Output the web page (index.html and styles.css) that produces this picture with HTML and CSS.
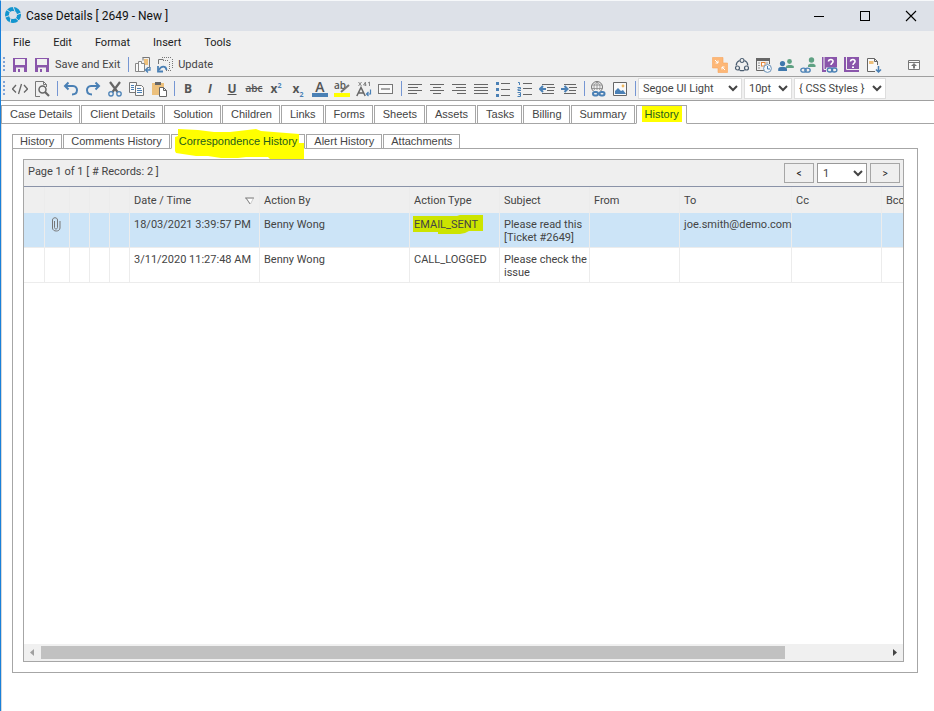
FILE: index.html
```html
<!DOCTYPE html>
<html lang="en">
<head>
<meta charset="utf-8">
<title>Case Details</title>
<link rel="stylesheet" href="styles.css">
</head>
<body>
<div class="window">
  <header class="titlebar">
    <svg class="logo" width="18" height="18" viewBox="0 0 18 18"><circle cx="9" cy="9" r="6" fill="none" stroke="#1295cf" stroke-width="4"/><path d="M9 .5l2 5M17 7l-5 2M15 15l-4-3.500M6 17l1-5M.5 11.500l5-2M2.500 3.500l4 3" stroke="#dde1e8" stroke-width="1"/></svg>
    <h1>Case Details [ 2649 - New ]</h1>
    <div class="winbtns">
      <button aria-label="Minimize"><svg width="12" height="12" viewBox="0 0 12 12"><path d="M1 6.500h10" stroke="#000"/></svg></button>
      <button aria-label="Maximize"><svg width="12" height="12" viewBox="0 0 12 12"><rect x="1.500" y="1.500" width="9" height="9" fill="none" stroke="#000"/></svg></button>
      <button aria-label="Close"><svg width="12" height="12" viewBox="0 0 12 12"><path d="M1 1l10 10M11 1L1 11" stroke="#000" stroke-width="1.100"/></svg></button>
    </div>
  </header>
  <nav class="menubar">
    <button>File</button><button>Edit</button><button>Format</button><button>Insert</button><button>Tools</button>
  </nav>
  <div class="toolbar">
    <span class="grip"></span>
    <button aria-label="Save"><svg viewBox="0 0 16 16"><path d="M1 1h14v14H1z" fill="#8a56ab"/><path d="M3 2h10v6H3zM4 10.500h8V15H4z" fill="#f0f0f0"/><path d="M6 12h2v3H6z" fill="#8a56ab"/></svg></button>
    <button class="labelled"><svg viewBox="0 0 16 16"><path d="M1 1h14v14H1z" fill="#8a56ab"/><path d="M3 2h10v6H3zM4 10.500h8V15H4z" fill="#f0f0f0"/><path d="M6 12h2v3H6z" fill="#8a56ab"/></svg><span>Save and Exit</span></button>
    <span class="sep wide"></span>
    <button aria-label="Copy to form"><svg viewBox="0 0 16 16"><path d="M7.500 .5h7v10h-2M8 .5v3" fill="none" stroke="#777"/><path d="M9 2h4v6H9z" fill="#eec07b"/><path d="M.5 6.500h3v-2h3v2M.5 6.500v8h9v-8h-3M3.500 6v8.500" fill="#fafafa" stroke="#888"/><path d="M15 10v3h-4m2-2.500L10.500 13l2.500 2.500" fill="none" stroke="#4a80b5" stroke-width="1.300"/></svg></button>
    <button class="labelled"><svg viewBox="0 0 16 16"><path d="M1.500 7V2.500h5" fill="none" stroke="#777"/><path d="M5 .5h9M15.500 2v10M9 13.500h6M6 3.500h6M12.500 5v7" stroke="#777" stroke-dasharray="1 1"/><path d="M9.500 13C9 8.500 4 8.500 2 13M1 9v5.500h5" fill="none" stroke="#4a80b5" stroke-width="1.800"/></svg><span>Update</span></button>
    <span class="spacer"></span>
    <button aria-label="Merge"><svg viewBox="0 0 16 16"><path d="M5 .5h6V6h4.500v9.500H6V11H.5V.5z" fill="#fdb777" stroke="#f8a45c" stroke-width=".6"/><path d="M3 3l3 3m0-2.500V6H3.500M13 13l-3-3m0 2.500V10h2.500" fill="none" stroke="#fff"/></svg></button>
    <button aria-label="Workflow"><svg viewBox="0 0 16 16" fill="none" stroke="#4b5d70" stroke-width="1.200"><circle cx="8" cy="3.500" r="2"/><circle cx="3.500" cy="11" r="2"/><circle cx="12.500" cy="11" r="2"/><path d="M5.500 3.500C3.500 4.500 2.200 6 2.200 8.500M10.500 3.500c2 1 3.300 2.500 3.300 5M5.500 13.200c2 .8 3 .8 5 0"/></svg></button>
    <button aria-label="Schedule"><svg viewBox="0 0 16 16"><path d="M.5 1v12.500H8M13.500 1v6M0 1.500h14" fill="none" stroke="#666"/><path d="M0 1h14v3H0z" fill="#666"/><path d="M2 6h2M10 6h2M2 11h2M2 8.500h2" stroke="#999"/><rect x="5.500" y="5.500" width="3.500" height="3.500" fill="#fff" stroke="#e5883c"/><circle cx="11.500" cy="11.500" r="3.900" fill="#f5f8fb" stroke="#6d93b8"/><path d="M11.500 9v3H14" fill="none" stroke="#4a80b5"/></svg></button>
    <button aria-label="Users"><svg viewBox="0 0 16 16"><circle cx="11.500" cy="4.500" r="2.400" fill="#5fa183"/><path d="M8 11V9.500c0-2 7.800-2 7.800 0V11z" fill="#5fa183"/><circle cx="4.500" cy="6.500" r="2.600" fill="#3f78ad"/><path d="M.2 14v-2c0-3 8.800-3 8.800 0v2z" fill="#3f78ad"/></svg></button>
    <button aria-label="Link user"><svg viewBox="0 0 16 16"><circle cx="11.500" cy="3" r="2.700" fill="#5fa183"/><path d="M8 10V8.500c0-2.500 7.500-2.500 7.500 0V10z" fill="#5fa183"/><ellipse cx="3.500" cy="13.200" rx="2.700" ry="2" fill="none" stroke="#4a80b5" stroke-width="1.300"/><ellipse cx="7.500" cy="13.200" rx="2.700" ry="2" fill="none" stroke="#4a80b5" stroke-width="1.300"/></svg></button>
    <button aria-label="Linked help"><svg viewBox="0 0 16 16"><path d="M0 0h15v15H0z" fill="#8a56ab"/><path d="M2 0v12.500h13" fill="none" stroke="#f0f0f0"/><path d="M6.500 4.500c0-2.800 5-2.500 4.500.2C10.800 6.300 9 6 9 8" fill="none" stroke="#fff" stroke-width="1.600"/><path d="M4 10.500h12V16H4z" fill="#f0f0f0"/><ellipse cx="8" cy="13" rx="2.700" ry="2" fill="none" stroke="#4a80b5" stroke-width="1.300"/><ellipse cx="12.200" cy="13" rx="2.700" ry="2" fill="none" stroke="#4a80b5" stroke-width="1.300"/></svg></button>
    <button aria-label="Help"><svg viewBox="0 0 16 16"><path d="M0 0h15v15H0z" fill="#8a56ab"/><path d="M2.500 0v12.500H15" fill="none" stroke="#f0f0f0"/><path d="M6.500 4.500c0-2.800 5-2.500 4.500.2C10.800 6.300 9 6 9 8" fill="none" stroke="#fff" stroke-width="1.600"/><path d="M8 9.500h2v1.500H8z" fill="#fff"/></svg></button>
    <button aria-label="Export"><svg viewBox="0 0 16 16"><path d="M9 14.500H1.500v-13h7l3 3V8M8.500 1.500v3h3" fill="#fafafa" stroke="#666"/><path d="M3 4h4.500v3H3z" fill="#eec07b"/><path d="M12.500 9v6M10 12.500l2.500 2.500 2.500-2.500" fill="none" stroke="#4a80b5" stroke-width="1.500"/></svg></button>
    <button class="apart" aria-label="Pop out"><svg viewBox="0 0 16 16"><path d="M2.500 3.500h11v9h-11zM2.500 5.500h11" fill="#fafafa" stroke="#777"/><path d="M8 6l3 3H9v2.500H7V9H5z" fill="#777"/></svg></button>
  </div>
  <div class="toolbar second">
    <span class="grip"></span>
    <button aria-label="Source"><svg viewBox="0 0 16 16" fill="none" stroke="#666" stroke-width="1.300"><path d="M4 4L.5 8 4 11.500M12 4l3.500 4-3.500 3.500M9.500 3l-3 10"/></svg></button>
    <button aria-label="Preview"><svg viewBox="0 0 16 16" fill="none" stroke="#777"><path d="M6 15.500H1.500V.5h8l3 3V6M9.500.5v3h3"/><circle cx="8.500" cy="8.500" r="3.500" stroke-width="1.500" stroke="#666"/><path d="M11 11l4 4" stroke-width="2.200" stroke="#666"/></svg></button>
    <span class="sep"></span>
    <button aria-label="Undo"><svg viewBox="0 0 16 16" fill="none" stroke="#4a80b5" stroke-width="2"><path d="M5.500 1.500L2 5l3.500 3.500M2 5h8c5.500 0 5.500 8.500-1 8.500"/></svg></button>
    <button aria-label="Redo"><svg viewBox="0 0 16 16" fill="none" stroke="#4a80b5" stroke-width="2"><path d="M10.500 1.500L14 5l-3.500 3.500M14 5H6C.5 5 .5 13.500 7 13.500"/></svg></button>
    <button aria-label="Cut"><svg viewBox="0 0 16 16" fill="none"><path d="M3 1l7.500 10M13 1L5.500 11" stroke="#666" stroke-width="2.200"/><circle cx="4" cy="12.800" r="2.200" stroke="#4a80b5" stroke-width="1.300"/><circle cx="12" cy="12.800" r="2.200" stroke="#4a80b5" stroke-width="1.300"/></svg></button>
    <button aria-label="Copy"><svg viewBox="0 0 16 16" fill="#fafafa" stroke="#777"><path d="M.5 1.500h7v10h-7z"/><path d="M6.500 4.500h6l2 2v8h-8z"/><path d="M2 4.500h3M2 6.500h3M2 8.500h3M8 7.500h4M8 9.500h5M8 11.500h5" stroke="#4a80b5"/></svg></button>
    <button aria-label="Paste"><svg viewBox="0 0 16 16"><path d="M1 2h12v12H1z" fill="#ecc07c"/><path d="M4 1h6v3H4z" fill="#666"/><path d="M8.500 6.500h4l3 3v6h-7zM12.500 6.500v3h3" fill="#fff" stroke="#666"/></svg></button>
    <span class="sep"></span>
    <button class="glyph bold">B</button>
    <button class="glyph bold italic">I</button>
    <button class="glyph bold underline">U</button>
    <button class="glyph strike">abc</button>
    <button class="glyph bold">x<sup>2</sup></button>
    <button class="glyph bold">x<sub>2</sub></button>
    <button class="glyph fore">A</button>
    <button class="glyph back">ab<svg class="pen" viewBox="0 0 10 10"><path d="M1 9l8-7" stroke="#777" stroke-width="2"/></svg></button>
    <button class="glyph size" aria-label="Change case"><svg viewBox="0 0 16 16" fill="none"><path d="M2.500 1l3 4M5.500 1l-3 4M9.500 5V1L7.500 4h3M12 2l1.500-1v4" stroke="#888"/><path d="M.8 15L5 6.500 9.200 15M2.500 12h5" stroke="#666" stroke-width="1.500"/><path d="M14.500 8.500V13H11m1.500-2l-2 2 2 2" stroke="#4a80b5" stroke-width="1.200"/></svg></button>
    <button aria-label="Horizontal rule"><svg viewBox="0 0 16 16"><rect x=".5" y="3.500" width="14" height="9" fill="#fafafa" stroke="#777"/><path d="M3 8h9" stroke="#888" stroke-width="1.500"/></svg></button>
    <span class="sep"></span>
    <button aria-label="Align left"><svg viewBox="0 0 16 16" stroke="#666"><path d="M1 3.500h14M1 6.500h10M1 9.500h14M1 12.500h9"/></svg></button>
    <button aria-label="Align centre"><svg viewBox="0 0 16 16" stroke="#666"><path d="M1 3.500h14M4 6.500h8M1 9.500h14M4 12.500h8"/></svg></button>
    <button aria-label="Align right"><svg viewBox="0 0 16 16" stroke="#666"><path d="M1 3.500h14M5 6.500h10M1 9.500h14M6 12.500h9"/></svg></button>
    <button aria-label="Justify"><svg viewBox="0 0 16 16" stroke="#666"><path d="M1 3.500h14M1 6.500h14M1 9.500h14M1 12.500h14"/></svg></button>
    <button aria-label="Bulleted list"><svg viewBox="0 0 16 16"><path d="M6 2.500h9M6 8.500h9M6 14.500h9" stroke="#666"/><path d="M1 1h3v3H1zM1 7h3v3H1zM1 13h3v3H1z" fill="#4a80b5"/></svg></button>
    <button aria-label="Numbered list"><svg viewBox="0 0 16 16" fill="none"><path d="M6 2.500h9M6 7.500h9M6 13.500h9" stroke="#666"/><path d="M1 1.500h1.500V4M.5 6.500h3v1.500H1v1.500h3M.5 11.500h3v4h-3M1.500 13.500h2" stroke="#4a80b5"/></svg></button>
    <button aria-label="Outdent"><svg viewBox="0 0 16 16"><path d="M3 3.500h12M8 6.500h8M8 9.500h7M3 12.500h12" stroke="#666"/><path d="M4 5L1 8l3 3M1 8h6" fill="none" stroke="#4a80b5" stroke-width="2"/></svg></button>
    <button aria-label="Indent"><svg viewBox="0 0 16 16"><path d="M3 3.500h12M8 6.500h8M8 9.500h7M3 12.500h12" stroke="#666"/><path d="M3.500 5l3 3-3 3M6.500 8H0" fill="none" stroke="#4a80b5" stroke-width="2"/></svg></button>
    <span class="sep"></span>
    <button aria-label="Hyperlink"><svg viewBox="0 0 16 16" fill="none"><circle cx="7" cy="6" r="5.500" stroke="#777"/><path d="M7 1v8M2 4h10M1.500 7.500h11M4.500 9C3.500 5 4 3 7 1c3 2 3.500 4 2.500 8" stroke="#888" stroke-width=".8"/><path d="M2 10h14v6H2z" fill="#f0f0f0"/><rect x="3" y="11" width="5" height="3.500" rx="1.700" stroke="#4a80b5" stroke-width="2"/><rect x="9.500" y="11" width="5" height="3.500" rx="1.700" stroke="#4a80b5" stroke-width="2"/></svg></button>
    <button aria-label="Image"><svg viewBox="0 0 16 16"><path d="M1.500 1.500h13v13h-13z" fill="#fafafa" stroke="#666"/><path d="M3 13V10l3-3 3 3 2-1 3 4z" fill="#4a80b5"/><circle cx="11" cy="5" r="1.400" fill="#f0b860"/></svg></button>
    <span class="sep"></span>
    <select class="family" aria-label="Font family"><option>Segoe UI Light</option></select>
    <select class="points" aria-label="Font size"><option>10pt</option></select>
    <select class="css" aria-label="CSS styles"><option>{ CSS Styles }</option></select>
  </div>

  <nav class="tabs main">
    <button>Case Details</button><button>Client Details</button><button>Solution</button><button>Children</button><button>Links</button><button>Forms</button><button>Sheets</button><button>Assets</button><button>Tasks</button><button>Billing</button><button>Summary</button><button class="active"><span class="mark">History</span></button>
  </nav>

  <main class="content">
    <nav class="tabs sub">
      <button>History</button><button>Comments History</button><button class="active"><svg class="marker" viewBox="0 0 130 30" width="130" height="30"><path d="M4 0l20 1 16 2h16l26-3 5 2 38 3v9h5v16H96l-2-2H72l-8 1H47l-13-2H22l-20-3-1-2V8l3-1z" fill="#ff0"/></svg><span>Correspondence History</span></button><button>Alert History</button><button>Attachments</button>
    </nav>
    <section class="panel">
      <div class="grid">
        <div class="pager">
          <span class="count">Page 1 of 1 [ # Records: 2 ]</span>
          <button>&lt;</button>
          <select aria-label="Page"><option>1</option></select>
          <button>&gt;</button>
        </div>
        <div class="scroll">
          <table>
            <colgroup><col class="c21"><col class="c25"><col class="c20"><col class="c20"><col class="c20"><col class="c130"><col class="c150"><col class="c90"><col class="c90"><col class="c90"><col class="c112"><col class="c90"><col class="c120"></colgroup>
            <thead><tr><th></th><th></th><th></th><th></th><th></th><th class="sorted"><div>Date / Time<svg width="9" height="8" viewBox="0 0 9 8"><path d="M1 1h7.500L5.500 7z" fill="#fff" stroke="#ccc"/><path d="M0 1h9M1 1l4 6" stroke="#888" fill="none"/></svg></div></th><th>Action By</th><th>Action Type</th><th>Subject</th><th>From</th><th>To</th><th>Cc</th><th>Bcc</th></tr></thead>
            <tbody>
              <tr class="selected"><td></td><td class="clip"><svg width="9" height="15" viewBox="0 0 9 15"><path d="M2.500 4v6.500c0 2 3 2 3 0V3c0-3-5-3-5 0v8c0 4 7.500 4 7.500 0V4" fill="none" stroke="#777"/></svg></td><td></td><td></td><td></td><td>18/03/2021 3:39:57 PM</td><td>Benny Wong</td><td><span class="stroke"><svg width="70" height="19" viewBox="0 0 70 19"><path d="M0 1h44l3-1h23v16H56l-4 2-5 1H25v-2H0z" fill="#cce400"/></svg><span>EMAIL_SENT</span></span></td><td>Please read this [Ticket #2649]</td><td></td><td>joe.smith@demo.com</td><td></td><td></td></tr>
              <tr><td></td><td></td><td></td><td></td><td></td><td>3/11/2020 11:27:48 AM</td><td>Benny Wong</td><td>CALL_LOGGED</td><td>Please check the issue</td><td></td><td></td><td></td><td></td></tr>
            </tbody>
          </table>
        </div>
        <div class="hbar">
          <svg width="17" height="17" viewBox="0 0 17 17"><path d="M10 5v7L6 8.500z" fill="#a0a0a0"/></svg>
          <div class="track"><div class="thumb"></div></div>
          <svg width="17" height="17" viewBox="0 0 17 17"><path d="M7 5v7l4-3.500z" fill="#444"/></svg>
        </div>
      </div>
    </section>
  </main>
</div>
</body>
</html>
```

FILE: styles.css
```css
* { box-sizing: border-box; }
body { margin: 0; background: #fff; color: #444; font: 11px/13px Roboto, "Open Sans", sans-serif; }
button, select { font: inherit; color: inherit; margin: 0; }
button { border: 0; padding: 0; background: none; white-space: nowrap; }

.window { display: flex; flex-direction: column; min-height: 100vh; border-left: 1px solid #1a80d9; border-top: 1px solid #f6f8fa; }

.titlebar { display: flex; align-items: center; height: 30px; padding-left: 3px; background: #dde1e8; color: #111; }
.titlebar h1 { flex: 1; margin: 0 0 0 4px; font-size: 12px; font-weight: 400; }
.logo { display: block; margin-bottom: 2px; }
.winbtns { display: flex; }
.winbtns button { width: 46px; height: 30px; }
.winbtns svg { display: block; margin: auto; }

.menubar { display: flex; gap: 23px; height: 22px; padding-left: 12px; background: #f0f0f0; color: #222; }

.toolbar { display: flex; align-items: center; height: 24px; padding: 0 9px 0 2px; background: #f0f0f0; border-bottom: 1px solid #a0a0a0; }
.toolbar button { position: relative; flex: none; display: flex; align-items: center; justify-content: center; width: 22px; height: 22px; }
.toolbar svg { display: block; width: 16px; height: 16px; }
.toolbar .labelled { width: auto; gap: 5px; padding-left: 3px; }
.grip { width: 2px; height: 15px; margin-right: 4px; background: repeating-linear-gradient(#7da3d8 0 2px, transparent 2px 4px); }
.sep { flex: none; width: 1px; height: 15px; margin: 0 2px 0 4px; background: #7596d3; }
.sep.wide { margin: 0 3px 0 8px; }
.spacer { flex: 1; }
.toolbar .apart { margin-left: 18px; }
.glyph { color: #555; font-family: "Open Sans", sans-serif; font-size: 12px; }
.bold { font-weight: 700; }
.italic { font-style: italic; }
.underline { text-decoration: underline; }
.strike { font-size: 10px; font-weight: 600; text-decoration: line-through; }
.glyph sup, .glyph sub { color: #4a80b5; font-size: 7px; line-height: 7px; }
.glyph sup { align-self: flex-start; padding-top: 4px; }
.glyph sub { align-self: flex-end; padding-bottom: 2px; }
.toolbar .fore, .toolbar .back { width: 16px; height: 16px; margin: 0 3px; line-height: 12px; align-items: flex-start; border-bottom: 4px solid #4a80b5; font-weight: 600; }
.fore { font-size: 14px; }
.toolbar .back { justify-content: flex-start; border-color: #ff0; font-size: 10px; line-height: 8px; }
.toolbar .pen { position: absolute; right: 0; top: 2px; width: 10px; height: 10px; }
.toolbar select { height: 21px; margin-left: 2px; padding: 0; border: 1px solid #ddd; border-radius: 0; background-color: #fff; }
.toolbar .family { width: 104px; margin-left: 0; }
.toolbar .points { width: 48px; }
.toolbar .css { width: 92px; }

.tabs { display: flex; gap: 1px; font-family: "Liberation Sans", Arial, sans-serif; }
.tabs button { position: relative; padding: 0 7px 0 8px; border: 1px solid #a6a6a6; background: #fff; }
.tabs .active { border-bottom-color: #fff; color: #245c1c; }
.tabs.main { margin-top: 4px; border-bottom: 1px solid #a6a6a6; }
.tabs.main button { height: 19px; margin-bottom: -1px; }
.mark { margin: 0 -3px; padding: 2px 3px; background: #ff0; }

.content { flex: 1; display: flex; flex-direction: column; padding: 10px 16px 38px 10px; border-left: 1px solid #d8d8d8; }
.tabs.sub { position: relative; z-index: 1; }
.tabs.sub button { height: 15px; margin-bottom: -1px; padding: 0 7px; line-height: 13px; }
.tabs.sub .active span { position: relative; }
.marker { position: absolute; left: 2px; top: -6px; }
.panel { flex: 1; display: flex; padding: 10px 13px 10px 10px; border: 1px solid #a6a6a6; }
.grid { flex: 1; display: flex; flex-direction: column; min-width: 0; border: 1px solid #a6a6a6; }

.pager { display: flex; align-items: center; gap: 3px; height: 27px; padding: 0 3px 0 4px; background: #efefef; border-bottom: 1px solid #8a93a8; }
.count { flex: 1; margin-bottom: 4px; }
.pager button { width: 30px; height: 20px; border: 1px solid #a6a6a6; color: #222; font-size: 10px; }
.pager select { width: 50px; height: 20px; border: 1px solid #999; border-radius: 0; background-color: #fff; padding: 0 0 0 1px; }

.scroll { flex: 1; overflow: hidden; }
table { table-layout: fixed; width: 978px; border-collapse: separate; border-spacing: 0; }
.c20 { width: 20px; } .c21 { width: 21px; } .c25 { width: 25px; } .c90 { width: 90px; }
.c112 { width: 112px; } .c120 { width: 120px; } .c130 { width: 130px; } .c150 { width: 150px; }
th, td { padding: 5px 0 3px 4px; border-right: 1px solid #ececec; text-align: left; vertical-align: top; font-weight: 400; }
th { height: 26px; padding: 7px 4px 5px; background: #efefef; }
th div { display: flex; justify-content: space-between; align-items: center; padding-right: 1px; }
td { height: 35px; border-bottom: 1px solid #ececec; }
.selected td { background: #cce4f7; }
.clip svg { display: block; margin: -1px 0 0 3px; }
.stroke { position: relative; display: block; }
.stroke svg { position: absolute; left: -1px; top: -3px; }
.stroke span { position: relative; }

.hbar { display: flex; height: 17px; background: #f0f0f0; }
.hbar svg { flex: none; }
.track { flex: 1; padding: 2px 0; }
.thumb { width: 88%; height: 13px; background: #c1c1c1; }
```
